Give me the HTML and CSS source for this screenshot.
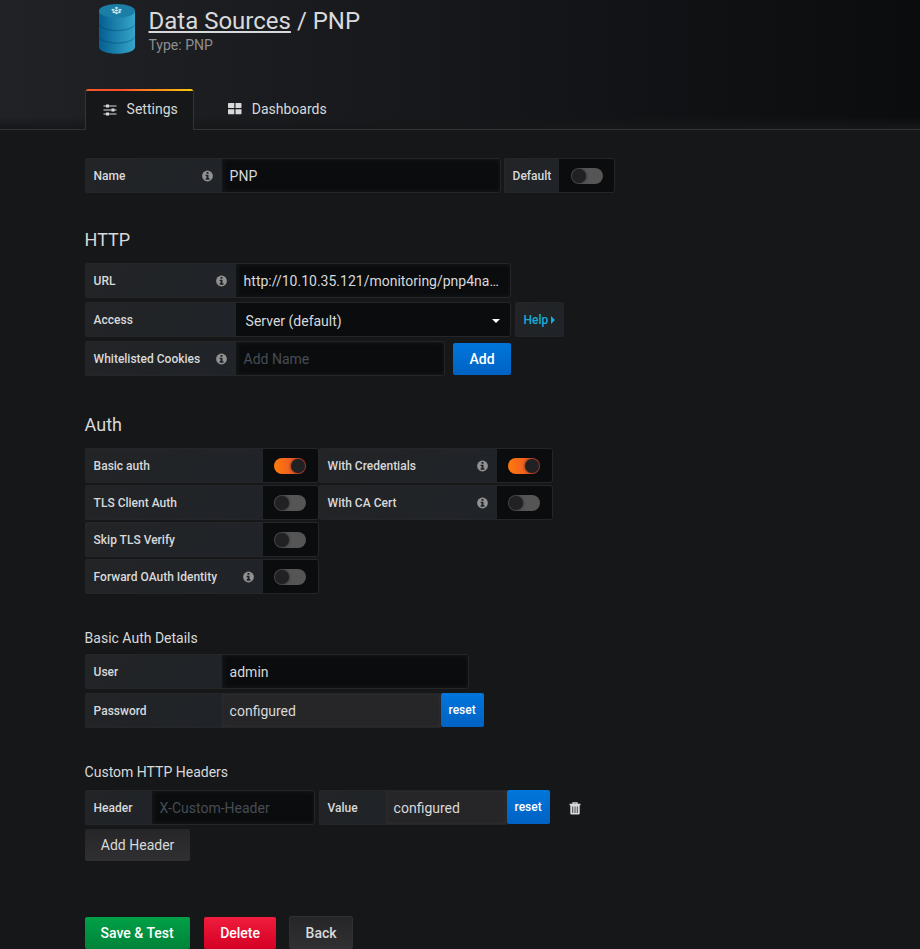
FILE: index.html
```html
<!DOCTYPE html>
<html lang="en">
<head>
<meta charset="utf-8">
<title>Data Sources / PNP</title>
<link rel="stylesheet" href="styles.css">
</head>
<body>
<svg class="defs" width="0" height="0" aria-hidden="true">
  <symbol id="info" viewBox="0 0 12 12"><circle cx="5.500" cy="6" r="5.400" fill="#929292"/><path d="M4.500 2h2v1.800h-2zM3.600 4.700h2.900v3.600h1v1.400H3.600V8.300h.9V6.100h-.9z" fill="#202226"/></symbol>
</svg>
<header class="page-header">
  <div class="title-row">
    <svg class="logo" width="36" height="50" viewBox="0 0 36 50">
      <defs><linearGradient id="db"><stop offset="0" stop-color="#045e92"/><stop offset="1" stop-color="#36a6ca"/></linearGradient><linearGradient id="band"><stop offset="0" stop-color="#04507f"/><stop offset="1" stop-color="#2088b0"/></linearGradient></defs>
      <path d="M0 7v36c0 9 36 9 36 0V7z" fill="url(#db)"/>
      <path d="M0 19c1 9 35 9 36 0v1.500c-1 9-35 9-36 0zM0 31.500c1 9 35 9 36 0V33c-1 9-35 9-36 0z" fill="url(#band)"/>
      <ellipse cx="18" cy="7" rx="18" ry="7" fill="#1b7ea6"/>
      <path d="M17.500 2.800l2 1.100-2 1.100-2-1.100zM14 4.700l2 1.100-2 1.100-2-1.100zM21 4.700l2 1.100-2 1.100-2-1.100zM17.500 5.300l2 1.100-2 1.100-2-1.100zM15 7l2 1.100-2 1.100-2-1.100zM20.500 7l2 1.100-2 1.100-2-1.100zM17.600 8l2 1.100-2 1.100-2-1.100z" fill="#d4edf5"/>
    </svg>
    <div class="titles">
      <h1><a>Data Sources</a> / PNP</h1>
      <div class="subtitle">Type: PNP</div>
    </div>
  </div>
  <nav class="tabs">
    <a class="tab active"><svg width="14" height="12" viewBox="0 0 14 12"><path d="M.5 2h13M.5 6h13M.5 10h13" stroke="#d8d9da" stroke-width="1.100"/><path d="M3 .5h3v3H3zM8.500 4.500h3v3h-3zM3 8.500h3v3H3z" fill="#d8d9da"/></svg><span>Settings</span></a>
    <a class="tab"><svg width="14" height="12" viewBox="0 0 14 12"><path d="M.7 0h5.600v5H.7a.7.7 0 0 1-.7-.7V.7A.7.7 0 0 1 .7 0zM7.500 0h5.300a.7.7 0 0 1 .7.7v3.600a.7.7 0 0 1-.7.7H7.500zM0 6.300h6.300v5H.7a.7.7 0 0 1-.7-.7zM7.500 6.300h6v4.300a.7.7 0 0 1-.7.7H7.500z" fill="#d8d9da"/></svg><span>Dashboards</span></a>
  </nav>
</header>
<main>
  <section class="general">
    <div class="row">
      <label class="label w137">Name<svg class="info"><use href="#info"/></svg></label><div class="input w279">PNP</div>
      <label class="label w55 gap3">Default</label><div class="switch-box"><i class="switch"></i></div>
    </div>
  </section>
  <section class="http">
    <h3>HTTP</h3>
    <div class="row"><label class="label w151">URL<svg class="info"><use href="#info"/></svg></label><div class="input w275">http://10.10.35.121/monitoring/pnp4na…</div></div>
    <div class="row"><label class="label w151">Access</label><div class="input select w275">Server (default)<i class="caret"></i></div><a class="label help">Help<i class="arrow"></i></a></div>
    <div class="row"><label class="label w151">Whitelisted Cookies<svg class="info"><use href="#info"/></svg></label><div class="input w209 placeholder">Add Name</div><button class="btn add">Add</button></div>
  </section>
  <section class="auth">
    <h3>Auth</h3>
    <div class="row"><label class="label w178">Basic auth</label><div class="switch-box"><i class="switch on"></i></div><label class="label w178">With Credentials<svg class="info"><use href="#info"/></svg></label><div class="switch-box"><i class="switch on"></i></div></div>
    <div class="row"><label class="label w178">TLS Client Auth</label><div class="switch-box"><i class="switch"></i></div><label class="label w178">With CA Cert<svg class="info"><use href="#info"/></svg></label><div class="switch-box"><i class="switch"></i></div></div>
    <div class="row"><label class="label w178">Skip TLS Verify</label><div class="switch-box"><i class="switch"></i></div></div>
    <div class="row"><label class="label w178">Forward OAuth Identity<svg class="info"><use href="#info"/></svg></label><div class="switch-box"><i class="switch"></i></div></div>
  </section>
  <section class="details">
    <h6>Basic Auth Details</h6>
    <div class="row"><label class="label w137">User</label><div class="input w247">admin</div></div>
    <div class="row"><label class="label w137">Password</label><div class="input disabled w219">configured</div><button class="btn reset">reset</button></div>
  </section>
  <section class="headers">
    <h6>Custom HTTP Headers</h6>
    <div class="row"><label class="label w67">Header</label><div class="input placeholder w163">X-Custom-Header</div><label class="label w67 gap4">Value</label><div class="input disabled w121">configured</div><button class="btn reset">reset</button>
      <svg class="trash" width="12" height="13" viewBox="0 0 12 13"><path d="M.5 2.500h11M4 2V.8h4V2" fill="none" stroke="#d8d9da" stroke-width="1.300"/><path d="M1.300 3h9.400v8.200a1.300 1.300 0 0 1-1.300 1.300H2.600a1.300 1.300 0 0 1-1.300-1.300z" fill="#d8d9da"/><path d="M3.700 4.500v6.500M6 4.500v6.500M8.300 4.500v6.500" stroke="#37383a" stroke-width=".9"/></svg>
    </div>
    <button class="btn inverse add-header">Add Header</button>
  </section>
  <div class="actions"><button class="btn save">Save &amp; Test</button><button class="btn delete">Delete</button><button class="btn inverse back">Back</button></div>
</main>
</body>
</html>
```
FILE: styles.css
```css
* { box-sizing: border-box; }
html, body { margin: 0; height: 949px; overflow: hidden; }
body { background: #161719; color: #d8d9da; font: 14px/21px Roboto, sans-serif; }
.defs { display: none; }
.page-header { height: 130px; padding: 4px 0 0 85px; border-bottom: 1px solid #343436; background: linear-gradient(transparent 116px, #161719), linear-gradient(90deg, #202226, #0b0c0e); }
.title-row { display: flex; height: 85px; padding-left: 14px; }
.logo { flex: none; }
.titles { margin-left: 13.5px; padding-top: 4px; }
h1 { margin: 0; font-size: 24px; line-height: 26px; font-weight: 400; white-space: nowrap; }
h1 a { text-decoration: underline; text-decoration-thickness: 2px; text-underline-offset: 2px; text-decoration-skip-ink: none; }
.subtitle { color: #8e8e8e; line-height: 21px; margin-top: 1px; }
.tabs { display: flex; height: 41px; }
.tab { display: flex; align-items: center; padding: 0 17px; height: 41px; }
.tab svg { flex: none; margin: -1px 9.7px 0 0; }
.tab.active { width: 109px; padding-right: 0; margin-right: 17px; border: 1px solid #343436; border-top: 0; border-bottom: 0; border-radius: 3px 3px 0 0; background: linear-gradient(90deg, #f05a28 0, #ff4d28 30%, #fbca0a 100%) top / 100% 2px no-repeat, #161719; }
.tab.active svg { margin: 0 9.6px 0 0; }
main { padding: 28px 0 0 84.6px; }
.row { display: flex; height: 35px; margin-bottom: 4px; }
.auth .row { margin-bottom: 2px; }
.label { flex: none; display: flex; align-items: center; justify-content: space-between; height: 35px; padding: 1px 8px 0; border: 1px solid #262628; border-right: 0; border-radius: 2px 0 0 2px; background: linear-gradient(135deg, #222426, #202328); font-size: 12px; font-weight: 500; white-space: nowrap; }
.info { width: 12px; height: 12px; margin-top: -1px; }
.input { flex: none; height: 35px; padding: 0 8px 0 8px; border: 1px solid #262628; border-left: 0; border-radius: 0 3px 3px 0; background: #0b0c0e; box-shadow: inset 1px 0 4px 1px #161719; line-height: 34px; overflow: hidden; white-space: nowrap; text-overflow: ellipsis; }
.input.select { display: flex; align-items: center; justify-content: space-between; padding: 2px 10px 0 10px; box-shadow: none; }
.input.disabled { background: #262628; box-shadow: inset 0 0 3px 1px #2d2d2f; border-radius: 0; }
.input.placeholder { color: #464c54; }
.switch-box { flex: none; display: flex; align-items: center; width: 56px; height: 35px; padding-left: 11px; border: 1px solid #262628; border-left: 0; border-radius: 0 3px 3px 0; background: #0b0c0e; }
.general .switch-box { padding-left: 12px; }
.switch { display: flex; width: 32px; height: 16px; padding: 1px; border-radius: 8px; background: #555556; }
.switch::before { content: ""; width: 14px; height: 14px; border-radius: 50%; background: #212124; box-shadow: 0 0 3px #222; }
.switch.on { justify-content: flex-end; background: linear-gradient(90deg, #ff7b0a, #e8532b 75%, #c93530); }
.caret { border: 4px solid transparent; border-top-color: #fff; border-bottom: 0; }
.help { width: 49px; margin-left: 4px; border-radius: 2px; color: #12aed6; justify-content: flex-start; }
.arrow { margin-left: 3px; border: 4px solid transparent; border-left-color: #12aed6; border-right: 0; }
.gap3 { margin-left: 3px; }
.gap4 { margin-left: 4px; }
.w55 { width: 55px; } .w67 { width: 67px; } .w121 { width: 121px; } .w137 { width: 137px; } .w151 { width: 151px; } .w163 { width: 163px; } .w178 { width: 178px; } .w209 { width: 209px; } .w219 { width: 219px; } .w247 { width: 247px; } .w275 { width: 275px; } .w279 { width: 279px; }
h3 { margin: 0; font-size: 18px; line-height: 24px; font-weight: 400; height: 35px; }
h6 { margin: 0; font-size: 14px; line-height: 21px; font-weight: 400; height: 26px; }
.http { padding-top: 31px; }
.auth { padding-top: 33px; }
.details { padding-top: 32px; }
.headers { padding-top: 30px; }
.headers h6 { height: 28px; }
.btn { flex: none; height: 32px; padding: 0; border: 0; border-radius: 2px; color: #fff; font: 500 14px/32px Roboto, sans-serif; background: linear-gradient(#0076db, #0062c4); }
.add { width: 58px; margin: 2px 0 0 8px; padding-left: 1px; }
.reset { width: 43px; height: 34px; font-size: 12px; line-height: 33px; }
.trash { margin: 12px 0 0 19.4px; }
.inverse { background: linear-gradient(#262628, #303032); color: #d8d9da; }
.add-header { display: block; width: 105px; padding-left: 1px; font-weight: 400; }
.actions { display: flex; align-items: flex-start; padding-top: 55px; }
.save { width: 105px; margin-top: 1px; background: linear-gradient(#00a047, #008439); }
.delete { width: 72px; margin: 1px 13px 0 14px; padding-left: 1px; background: linear-gradient(#f01d3e, #d40024); }
.back { width: 64px; height: 33px; padding-left: 1px; border: 1px solid #303032; }
```
